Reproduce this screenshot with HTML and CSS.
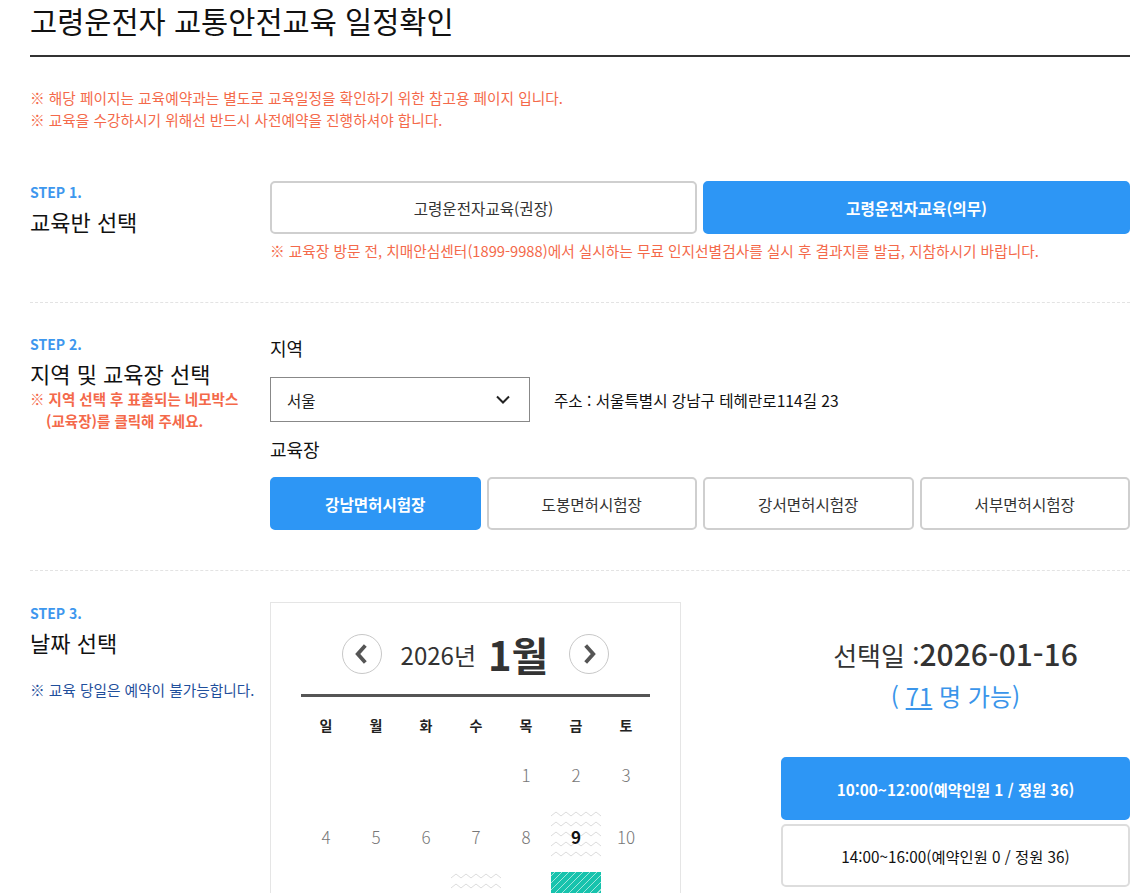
FILE: index.html
```html
<!DOCTYPE html>
<html lang="ko">
<head>
    <meta charset="UTF-8">
    <meta name="viewport" content="width=device-width, initial-scale=1.0">
    <title>고령운전자 교통안전교육 일정확인</title>
    <link rel="stylesheet" href="styles.css">
</head>
<body>
    <div class="wrap">
        <h1 class="page-title">고령운전자 교통안전교육 일정확인</h1>

        <div class="notice">
            <p>※ 해당 페이지는 교육예약과는 별도로 교육일정을 확인하기 위한 참고용 페이지 입니다.</p>
            <p>※ 교육을 수강하시기 위해선 반드시 사전예약을 진행하셔야 합니다.</p>
        </div>

        <!-- step 1 -->
        <section class="step">
            <div class="step-head">
                <p class="step-num">STEP 1.</p>
                <h2 class="step-title">교육반 선택</h2>
            </div>
            <div class="step-body">
                <div class="btn-row two">
                    <button class="opt">고령운전자교육(권장)</button>
                    <button class="opt on">고령운전자교육(의무)</button>
                </div>
                <p class="warn">※ 교육장 방문 전, 치매안심센터(1899-9988)에서 실시하는 무료 인지선별검사를 실시 후 결과지를 발급, 지참하시기 바랍니다.</p>
            </div>
        </section>

        <!-- step 2 -->
        <section class="step">
            <div class="step-head">
                <p class="step-num">STEP 2.</p>
                <h2 class="step-title">지역 및 교육장 선택</h2>
                <p class="step-note">※ 지역 선택 후 표출되는 네모박스<br>(교육장)를 클릭해 주세요.</p>
            </div>
            <div class="step-body">
                <p class="field-label">지역</p>
                <div class="region-row">
                    <div class="select-box">
                        <span>서울</span>
                        <svg width="14" height="9" viewBox="0 0 14 9"><path d="M1 1.5 L7 7.5 L13 1.5" fill="none" stroke="#222" stroke-width="2"/></svg>
                    </div>
                    <p class="address">주소 : 서울특별시 강남구 테헤란로114길 23</p>
                </div>
                <p class="field-label venue-label">교육장</p>
                <div class="btn-row four">
                    <button class="opt on">강남면허시험장</button>
                    <button class="opt">도봉면허시험장</button>
                    <button class="opt">강서면허시험장</button>
                    <button class="opt">서부면허시험장</button>
                </div>
            </div>
        </section>

        <!-- step 3 -->
        <section class="step last">
            <div class="step-head">
                <p class="step-num">STEP 3.</p>
                <h2 class="step-title">날짜 선택</h2>
                <p class="step-info">※ 교육 당일은 예약이 불가능합니다.</p>
            </div>
            <div class="step-body date-body">
                <div class="calendar">
                    <div class="cal-head">
                        <button class="cal-arrow">
                            <svg width="40" height="40" viewBox="0 0 40 40"><path d="M23.5 11 L15.5 20 L23.5 29" fill="none" stroke="#555" stroke-width="4"/></svg>
                        </button>
                        <span class="cal-year">2026년</span>
                        <span class="cal-month">1월</span>
                        <button class="cal-arrow">
                            <svg width="40" height="40" viewBox="0 0 40 40"><path d="M16.5 11 L24.5 20 L16.5 29" fill="none" stroke="#555" stroke-width="4"/></svg>
                        </button>
                    </div>
                    <div class="week">
                        <span>일</span><span>월</span><span>화</span><span>수</span><span>목</span><span>금</span><span>토</span>
                    </div>
                    <div class="days">
                        <span class="day"></span><span class="day"></span><span class="day"></span><span class="day"></span>
                        <span class="day">1</span><span class="day">2</span><span class="day">3</span>

                        <span class="day">4</span><span class="day">5</span><span class="day">6</span><span class="day">7</span>
                        <span class="day">8</span><span class="day avail">9</span><span class="day">10</span>

                        <span class="day">11</span><span class="day">12</span><span class="day">13</span><span class="day avail">14</span>
                        <span class="day">15</span><span class="day sel">16</span><span class="day">17</span>

                        <span class="day">18</span><span class="day">19</span><span class="day">20</span><span class="day">21</span>
                        <span class="day">22</span><span class="day">23</span><span class="day">24</span>

                        <span class="day">25</span><span class="day">26</span><span class="day">27</span><span class="day">28</span>
                        <span class="day">29</span><span class="day">30</span><span class="day">31</span>
                    </div>
                </div>

                <div class="slot-panel">
                    <p class="sel-date"><span class="sel-label">선택일 :</span>2026-01-16</p>
                    <p class="sel-count">( <u>71</u> 명 가능)</p>
                    <div class="slots">
                        <button class="slot on">10:00~12:00(예약인원 1 / 정원 36)</button>
                        <button class="slot">14:00~16:00(예약인원 0 / 정원 36)</button>
                    </div>
                </div>
            </div>
        </section>
    </div>
</body>
</html>
```

FILE: styles.css
```css
body {
    margin: 0;
    font-family: "Noto Sans CJK KR", "Noto Sans", sans-serif;
    color: #111;
    background: #fff;
}
p {
    margin: 0;
}
button {
    font-family: inherit;
    cursor: pointer;
}
.wrap {
    width: 1100px;
    margin-left: 30px;
    padding-bottom: 60px;
}
.page-title {
    margin: 0;
    font-size: 29.5px;
    font-weight: 400;
    line-height: 40px;
    padding-bottom: 15px;
    border-bottom: 2px solid #333;
}
.notice {
    margin: 30px 0 20px;
    font-size: 14.7px;
    line-height: 22px;
    color: #f4694a;
}

/* steps */
.step {
    display: flex;
    padding: 30px 0 40px;
    border-bottom: 1px dashed #e3e3e3;
}
.step.last {
    border-bottom: none;
    padding-top: 31px;
}
.step-head {
    width: 240px;
    flex-shrink: 0;
}
.step-body {
    flex: 1;
}
.step-num {
    font-size: 14px;
    font-weight: 700;
    line-height: 22px;
    color: #3d97ee;
}
.step-title {
    margin: 3px 0 0;
    font-size: 22px;
    font-weight: 400;
    line-height: 30px;
}
.step-note {
    font-size: 14.5px;
    font-weight: 700;
    line-height: 22px;
    color: #f4694a;
    padding-left: 16px;
    text-indent: -16px;
}
.step-info {
    margin-top: 22px;
    font-size: 14.7px;
    line-height: 22px;
    color: #1f4f9c;
}

/* option buttons */
.btn-row {
    display: grid;
    gap: 6px;
}
.btn-row.two {
    grid-template-columns: repeat(2, 1fr);
}
.btn-row.four {
    grid-template-columns: repeat(4, 1fr);
    margin-top: 13px;
}
.opt {
    height: 53px;
    border: 2px solid #cfcfcf;
    border-radius: 5px;
    background: #fff;
    font-size: 15.6px;
    color: #333;
}
.opt.on {
    background: #2d96f5;
    border-color: #2d96f5;
    color: #fff;
    font-weight: 700;
}
.warn {
    margin-top: 6px;
    font-size: 14.7px;
    line-height: 22px;
    color: #f4694a;
}

/* region */
.field-label {
    font-size: 18px;
    line-height: 30px;
}
.venue-label {
    margin-top: 12px;
}
.region-row {
    display: flex;
    align-items: center;
    margin-top: 14px;
}
.select-box {
    width: 260px;
    height: 45px;
    box-sizing: border-box;
    border: 1px solid #888;
    display: flex;
    align-items: center;
    justify-content: space-between;
    padding: 0 19px 0 16px;
    font-size: 15.5px;
    color: #222;
}
.address {
    margin-left: 24px;
    font-size: 15.6px;
    color: #111;
}

/* calendar */
.date-body {
    display: flex;
    align-items: flex-start;
}
.calendar {
    width: 411px;
    box-sizing: border-box;
    border: 1px solid #e5e5e5;
    padding: 31px 30px 30px;
}
.cal-head {
    height: 40px;
    padding-bottom: 20px;
    border-bottom: 3px solid #555;
    display: flex;
    align-items: center;
    justify-content: center;
}
.cal-arrow {
    width: 40px;
    height: 40px;
    padding: 0;
    border: 1px solid #c8c8c8;
    border-radius: 50%;
    background: #fff;
    display: flex;
    align-items: center;
    justify-content: center;
}
.cal-arrow svg {
    display: block;
}
.cal-year {
    margin-left: 19px;
    font-size: 24px;
    color: #333;
}
.cal-month {
    margin: 0 21px 0 12px;
    font-size: 40px;
    font-weight: 700;
    line-height: 40px;
    color: #333;
}
.week,
.days {
    display: grid;
    grid-template-columns: repeat(7, 50px);
}
.week {
    margin-top: 16px;
    font-size: 14px;
    font-weight: 700;
    line-height: 24px;
    text-align: center;
    color: #222;
}
.days {
    margin-top: 11px;
    grid-auto-rows: 52px;
    row-gap: 10px;
}
.day {
    display: flex;
    align-items: center;
    justify-content: center;
    font-size: 17px;
    font-weight: 300;
    color: #777;
}
.day.avail {
    color: #111;
    font-weight: 700;
    background-image: url("data:image/svg+xml,%3Csvg xmlns='http://www.w3.org/2000/svg' width='10' height='10'%3E%3Cpath d='M0 6 L5 2 L10 6' fill='none' stroke='%23dcdcdc' stroke-width='1'/%3E%3C/svg%3E");
    background-size: 10px 10px;
}
.day.sel {
    color: #fff;
    font-weight: 700;
    background: repeating-linear-gradient(-45deg, #17c3ad 0 4px, #9fe6dc 4px 5px);
}

/* time slots */
.slot-panel {
    flex: 1;
    margin-left: 100px;
    text-align: center;
}
.sel-date {
    margin-top: 31px;
    font-size: 30px;
    font-weight: 500;
    line-height: 40px;
    color: #333;
}
.sel-label {
    font-size: 26px;
    font-weight: 400;
}
.sel-count {
    margin-top: 3px;
    font-size: 24px;
    line-height: 36px;
    color: #3a95ea;
}
.slots {
    margin-top: 43px;
    display: flex;
    flex-direction: column;
    gap: 4px;
}
.slot {
    height: 63px;
    border: 2px solid #ddd;
    border-radius: 5px;
    background: #fff;
    font-size: 15.3px;
    color: #111;
}
.slot.on {
    background: #2d96f5;
    border-color: #2d96f5;
    color: #fff;
    font-weight: 700;
}
```
